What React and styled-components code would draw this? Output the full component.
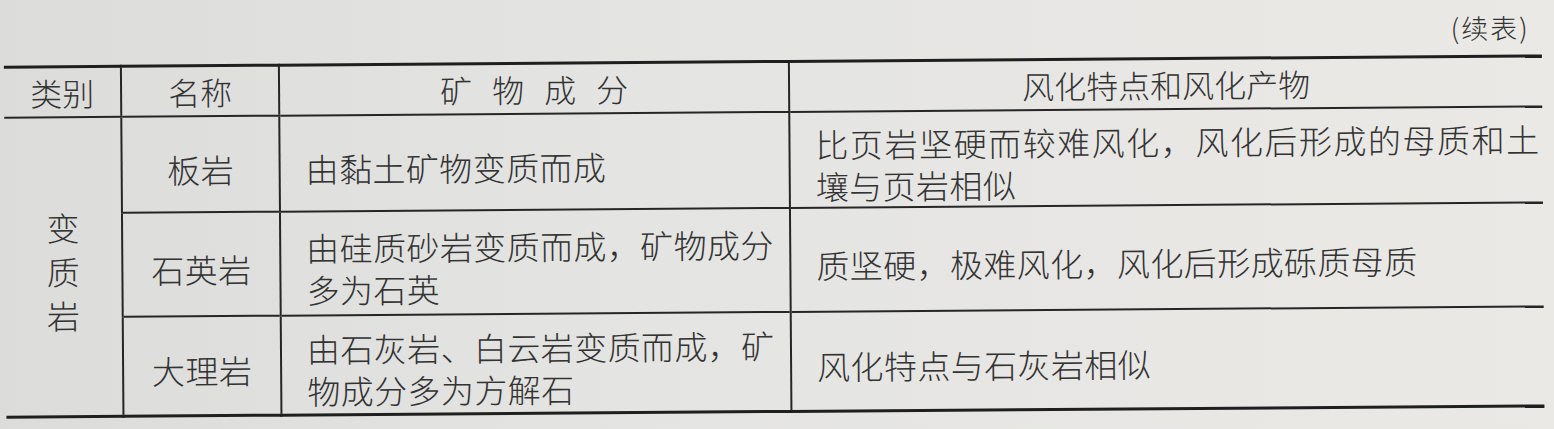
import React from "react";
import styled, { createGlobalStyle } from "styled-components";

const GlobalStyle = createGlobalStyle`
  html, body {
    margin: 0;
    padding: 0;
  }
  body {
    width: 1554px;
    height: 429px;
    overflow: hidden;
    background: linear-gradient(90deg, #dcdcda 0%, #e4e4e2 40%, #eae9e6 100%);
    font-family: "Noto Sans CJK SC", "Noto Sans", sans-serif;
    color: #333;
  }
`;

// the photo of the page is slightly tilted
const Page = styled.div`
  width: 1554px;
  height: 429px;
  box-sizing: border-box;
  padding: 0 11px 0 5px;
  transform: rotate(-0.42deg);
`;

const Caption = styled.div`
  height: 60px;
  box-sizing: border-box;
  padding: 5px 12px 0 0;
  display: flex;
  justify-content: flex-end;
  align-items: center;
  font-size: 27px;
  font-weight: 300;
  letter-spacing: 2px;
`;

const Table = styled.table`
  width: 1538px;
  table-layout: fixed;
  border-collapse: collapse;
  border-top: 3px solid #1f1f1f;
  border-bottom: 3px solid #1f1f1f;
`;

const HeadCell = styled.th`
  height: 50px;
  box-sizing: border-box;
  padding: 0 0 0 ${(p) => p.$spread || 0}px;
  font-size: 32px;
  font-weight: 300;
  line-height: 40px;
  letter-spacing: ${(p) => p.$spread || 0}px;
  text-align: center;
  vertical-align: middle;
  border-bottom: 2px solid #262626;
  border-left: ${(p) => (p.$first ? "none" : "2px solid #262626")};
`;

const Row = styled.tr`
  height: ${(p) => p.$h}px;
`;

const Cell = styled.td`
  padding: 10px 0 0 ${(p) => (p.$center ? 0 : 25)}px;
  font-size: 33px;
  font-weight: 300;
  line-height: 42px;
  letter-spacing: 0.4px;
  text-align: ${(p) => (p.$center ? "center" : "left")};
  vertical-align: middle;
  border-top: 2px solid #262626;
  border-left: ${(p) => (p.$first ? "none" : "2px solid #262626")};
  white-space: nowrap;
`;

const VerticalText = styled.div`
  display: flex;
  flex-direction: column;
  align-items: center;
  line-height: 44px;
`;

const Line = styled.div`
  text-align: left;
  text-align-last: ${(p) => (p.$fill ? "justify" : "auto")};
  padding-right: ${(p) => (p.$fill ? 3 : 0)}px;
`;

const rows = [
  {
    name: "板岩",
    h: 96,
    mineral: ["由黏土矿物变质而成"],
    weather: ["比页岩坚硬而较难风化，风化后形成的母质和土", "壤与页岩相似"],
    fill: true,
  },
  {
    name: "石英岩",
    h: 104,
    mineral: ["由硅质砂岩变质而成，矿物成分", "多为石英"],
    weather: ["质坚硬，极难风化，风化后形成砾质母质"],
  },
  {
    name: "大理岩",
    h: 100,
    mineral: ["由石灰岩、白云岩变质而成，矿", "物成分多为方解石"],
    weather: ["风化特点与石灰岩相似"],
  },
];

export default function App() {
  return (
    <>
      <GlobalStyle />
      <Page>
        <Caption>(续表)</Caption>
        <Table>
          <colgroup>
            <col style={{ width: 117 }} />
            <col style={{ width: 158 }} />
            <col style={{ width: 510 }} />
            <col style={{ width: 753 }} />
          </colgroup>
          <thead>
            <tr>
              <HeadCell $first>类别</HeadCell>
              <HeadCell>名称</HeadCell>
              <HeadCell $spread={20}>矿物成分</HeadCell>
              <HeadCell>风化特点和风化产物</HeadCell>
            </tr>
          </thead>
          <tbody>
            {rows.map((r, i) => (
              <Row key={r.name} $h={r.h}>
                {i === 0 && (
                  <Cell $first $center rowSpan={3}>
                    <VerticalText>
                      <span>变</span>
                      <span>质</span>
                      <span>岩</span>
                    </VerticalText>
                  </Cell>
                )}
                <Cell $center>{r.name}</Cell>
                <Cell>
                  {r.mineral.map((t) => (
                    <Line key={t}>{t}</Line>
                  ))}
                </Cell>
                <Cell>
                  {r.weather.map((t, j) => (
                    <Line key={t} $fill={r.fill && j === 0}>
                      {t}
                    </Line>
                  ))}
                </Cell>
              </Row>
            ))}
          </tbody>
        </Table>
      </Page>
    </>
  );
}
